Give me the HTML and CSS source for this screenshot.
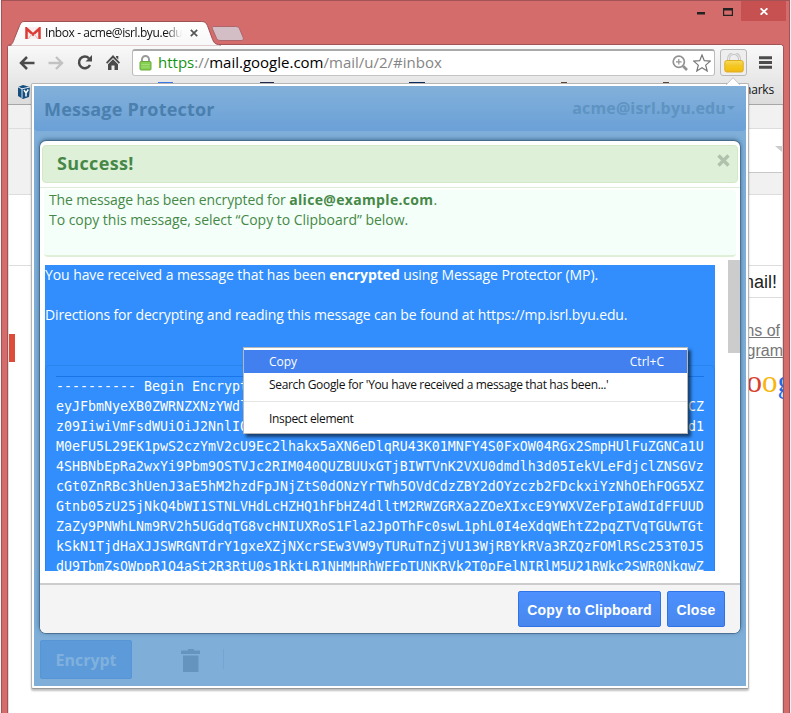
FILE: index.html
```html
<!DOCTYPE html>
<html lang="en">
<head>
<meta charset="utf-8">
<title>Message Protector</title>
<link rel="stylesheet" href="styles.css">
</head>
<body>
<div class="window">
  <header class="titlebar">
    <svg class="tab-shape" width="245" height="25" viewBox="0 0 245 25">
      <defs><linearGradient id="tabg" x1="0" y1="0" x2="0" y2="1"><stop offset="0" stop-color="#fff"/><stop offset="1" stop-color="#f7f7f7"/></linearGradient></defs>
      <path d="M0 25 C4 23 4 21 6 16 L10 6 C12 1 13 .5 16 .5 H191 C196 .5 197 1 199 6 L203 17 C205 22 206 23.500 211 23.500 V25 Z" fill="url(#tabg)" stroke="#9d5154"/>
      <path d="M3 25 H211 V24.500 H3Z" fill="#f7f7f7"/>
      <path d="M205 5.500 H225 C229 5.500 230 6 231 9 L234 16 C235 19 234 19.500 232 19.500 H212 C209 19.500 208 19 207 16 L203.500 8 C202.500 6 203 5.500 205 5.500 Z" fill="#d4bec6" stroke="#ae656c"/>
    </svg>
    <div class="tab">
      <svg width="16" height="12" viewBox="0 0 16 12"><path d="M1 0h14v12H1z" fill="#f8eeee"/><path d="M1.500 12V1.500L8 7.500l6.500-6V12" fill="none" stroke="#dc3b35" stroke-width="2.500"/><path d="M3 12l4-5M13 12L9 7" stroke="#e4b5b2" fill="none"/></svg>
      <span class="tab-title">Inbox - acme@isrl.byu.edu</span>
      <svg width="8" height="8" viewBox="0 0 8 8"><path d="M.8.8l6.400 6.400M7.200.8L.8 7.200" stroke="#555" stroke-width="1.700"/></svg>
    </div>
    <div class="controls">
      <svg width="8" height="3"><path d="M0 0h8v2.500H0z" fill="#222"/></svg>
      <svg width="10" height="8" viewBox="0 0 10 8"><path d="M0 0h10v8H0zM1.200 2.400v4.400h7.600V2.400z" fill="#222" fill-rule="evenodd"/></svg>
      <div class="close-win"><svg width="8" height="7" viewBox="0 0 8 7"><path d="M.6.300l6.800 6.400M7.400.300L.6 6.700" stroke="#fff" stroke-width="1.800"/></svg></div>
    </div>
  </header>
  <div class="client">
    <div class="toolbar">
      <div class="nav">
        <svg width="16" height="14" viewBox="0 0 16 14"><path d="M15.500 7H2.500M8 1L2 7l6 6" fill="none" stroke="#4b4b4b" stroke-width="2.500"/></svg>
        <svg width="16" height="14" viewBox="0 0 16 14"><path d="M.5 7h13M8 1l6 6-6 6" fill="none" stroke="#c2c2c2" stroke-width="2.400"/></svg>
        <svg width="16" height="15" viewBox="0 0 16 15"><path d="M12 3.300A5.800 5.800 0 1 0 13 10" fill="none" stroke="#4b4b4b" stroke-width="2.500"/><path d="M15 0v6.500H8.500z" fill="#4b4b4b"/></svg>
        <svg width="14" height="15" viewBox="0 0 14 15"><path d="M7 0l7 7.500-1.200 1.200L7 3 1.200 8.700 0 7.500zM10 1h2.300v3.500L10 2.300zM2 9.200L7 4.300l5 4.900V15H8.500v-4.500h-3V15H2z" fill="#4b4b4b"/></svg>
      </div>
      <div class="omnibox">
        <svg width="13" height="16" viewBox="0 0 13 16"><path d="M3 8V4.500a3.500 3.500 0 0 1 7 0V8" fill="none" stroke="#9a9a9a" stroke-width="2"/><rect x="1" y="6.500" width="11" height="8.500" rx="1" fill="#86cf50" stroke="#69a93c"/><path d="M2.500 9.500h8M2.500 12h8" stroke="#a5df79"/></svg>
        <span class="url"><span class="secure">https</span><span class="dim">://</span>mail.google.com<span class="dim">/mail/u/2/#inbox</span></span>
        <svg class="mag" width="16" height="16" viewBox="0 0 16 16"><circle cx="6.800" cy="6.800" r="5.600" fill="none" stroke="#929292" stroke-width="1.700"/><path d="M11 11l4 4" stroke="#929292" stroke-width="2.600"/><path d="M6.800 4v5.600M4 6.800h5.600" stroke="#929292" stroke-width="1.200"/></svg>
        <svg width="18" height="18" viewBox="0 0 18 18"><path d="M9 1l2.300 5.700 6 .4-4.600 4 1.500 5.900L9 13.800l-5.200 3.200 1.500-5.900-4.600-4 6-.4z" fill="none" stroke="#777" stroke-width="1.200"/></svg>
      </div>
      <div class="ext"><svg width="20" height="20" viewBox="0 0 20 20"><defs><linearGradient id="gold" x1="0" y1="0" x2="0" y2="1"><stop offset="0" stop-color="#f9dc55"/><stop offset=".5" stop-color="#f2c326"/><stop offset=".55" stop-color="#f5cb13"/><stop offset="1" stop-color="#f0b61c"/></linearGradient></defs><path d="M4.500 9V6a5 5 0 0 1 11 0V9" fill="none" stroke="#c4c4c4" stroke-width="3"/><path d="M4.500 9V6a5 5 0 0 1 11 0V9" fill="none" stroke="#eee"/><rect x=".8" y="7.500" width="18.400" height="11.500" rx="2" fill="url(#gold)" stroke="#dfad25"/></svg></div>
      <svg width="13" height="13" viewBox="0 0 13 13"><path d="M0 1.700h13M0 6.500h13M0 11.300h13" stroke="#4c4c4c" stroke-width="2.900"/></svg>
    </div>
    <div class="bookmarks">
      <svg width="12" height="16" viewBox="0 0 12 16"><path d="M0 3l5-2 7 2-1 10-6 2-5-3z" fill="#164e7e"/><path d="M4 4.500V14M0 3l4 1.800L12 3" stroke="#dfe8f1" fill="none"/><path d="M6 6l2 3 2.300-3.500M8 9v3.500" stroke="#fff" fill="none" stroke-width="1.500"/></svg>
      <div class="tips"><i class="t1"></i><i class="t2"></i><i class="t3"></i><i class="t4"></i><i class="t4 t5"></i></div>
      <span>Other bookmarks</span>
    </div>
    <main class="mail">
      <div class="band strip-a"></div>
      <div class="band strip-b"><i class="caret"></i></div>
      <div class="band strip-c"></div>
      <div class="band strip-d"></div>
      <div class="band strip-e">mail!</div>
      <div class="rest">
        <div class="selected"></div>
        <div class="side">
          <div class="links"><span>Terms of</span><span>Program</span></div>
          <div class="logo"><b class="g-red">o</b><b class="g-yel">o</b><b class="g-blu">g</b></div>
        </div>
      </div>
    </main>
  </div>
</div>

<div class="popup">
  <div class="app">
    <div class="app-head"><span class="brand">Message Protector</span><span class="account">acme@isrl.byu.edu<i></i></span></div>
    <div class="modal">
      <div class="modal-head">
        <div class="success"><span>Success!</span><svg width="13" height="13" viewBox="0 0 13 13"><path d="M1.500 1.500l10 10M11.500 1.500l-10 10" stroke="#b0c2ab" stroke-width="3.400"/></svg></div>
      </div>
      <div class="notice">
        <div class="l1">The message has been encrypted for <b>alice@example.com</b>.</div>
        <div class="l2">To copy this message, select “Copy to Clipboard” below.</div>
      </div>
      <div class="scroll">
        <div class="message">
          <p class="p1">You have received a message that has been <b>encrypted</b> using Message Protector (MP).</p>
          <p class="p2">Directions for decrypting and reading this message can be found at https://mp.isrl.byu.edu.</p>
          <div class="cipher">
            <div>---------- Begin Encrypt</div>
            <div><span>eyJFbmNyeXB0ZWRNZXNzYWdl</span><span>CZ</span></div>
            <div><span>z09IiwiVmFsdWUiOiJ2NnlIQ</span><span>d1</span></div>
            <div>M0eFU5L29EK1pwS2czYmV2cU9Ec2lhakx5aXN6eDlqRU43K01MNFY4S0FxOW04RGx2SmpHUlFuZGNCa1U</div>
            <div>4SHBNbEpRa2wxYi9Pbm9OSTVJc2RIM040QUZBUUxGTjBIWTVnK2VXU0dmdlh3d05IekVLeFdjclZNSGVz</div>
            <div>cGt0ZnRBc3hUenJ3aE5hM2hzdFpJNjZtS0dONzYrTWh5OVdCdzZBY2dOYzczb2FDckxiYzNhOEhFOG5XZ</div>
            <div>Gtnb05zU25jNkQ4bWI1STNLVHdLcHZHQ1hFbHZ4dlltM2RWZGRXa2ZOeXIxcE9YWXVZeFpIaWdIdFFUUD</div>
            <div>ZaZy9PNWhLNm9RV2h5UGdqTG8vcHNIUXRoS1Fla2JpOThFc0swL1phL0I4eXdqWEhtZ2pqZTVqTGUwTGt</div>
            <div>kSkN1TjdHaXJJSWRGNTdrY1gxeXZjNXcrSEw3VW9yTURuTnZjVU13WjRBYkRVa3RZQzFOMlRSc253T0J5</div>
            <div>dU9TbmZsQWppR1Q4aSt2R3RtU0s1RktLR1NHMHRhWFFpTUNKRVk2T0pFelNIRlM5U21RWkc2SWR0NkgwZ</div>
          </div>
        </div>
        <div class="thumb"></div>
      </div>
      <div class="modal-foot"><button class="copy">Copy to Clipboard</button><button>Close</button></div>
    </div>
    <div class="app-foot">
      <div class="encrypt"><span>Encrypt</span></div>
      <svg width="20" height="24" viewBox="0 0 20 24"><path d="M7 0h6v1.500h6V5H0V1.500h7zM2 6.500h15.500V23H2z" fill="#6594bf"/></svg>
      <i></i>
    </div>
  </div>
  <svg class="arrow" width="14" height="8" viewBox="0 0 14 8"><path d="M0 8L7 .7 14 8" fill="#fff" stroke="#bbb" stroke-width=".8"/></svg>
</div>

<div class="menu">
  <div class="item active"><span>Copy</span><span class="key">Ctrl+C</span></div>
  <div class="item search"><span>Search Google for 'You have received a message that has been...'</span></div>
  <hr>
  <div class="item inspect"><span>Inspect element</span></div>
</div>
</body>
</html>
```
FILE: styles.css
```css
* { box-sizing: border-box; }
body { margin: 0; width: 791px; height: 713px; overflow: hidden; position: relative; background: #f4f4f4; font-family: "Open Sans", sans-serif; }
svg { display: block; flex: none; }

/* Browser window */
.window { width: 789px; height: 714px; margin-left: 1px; padding: 0 5px; background: #d56c6c; border: 1px solid #a25355; border-bottom: 0; }
.titlebar { height: 43px; position: relative; display: flex; justify-content: space-between; }
.tab-shape { position: absolute; left: 2px; top: 20px; z-index: 1; }
.tab { position: relative; z-index: 2; width: 200px; margin: 21px 0 0 18px; height: 22px; display: flex; align-items: center; }
.tab-title { width: 137px; margin: 0 8px 0 4px; overflow: hidden; white-space: nowrap; font-size: 12px; line-height: 22px; letter-spacing: -.42px; color: #111; -webkit-mask-image: linear-gradient(90deg, #000 88%, transparent); mask-image: linear-gradient(90deg, #000 88%, transparent); }
.controls { display: flex; height: 20px; align-items: center; margin-right: -2px; }
.controls > svg:first-child { margin: 5px 18px 0 0; }
.controls > svg:nth-child(2) { margin: 1px 8px 0 0; }
.close-win { width: 45px; height: 20px; background: #c75050; display: flex; align-items: center; justify-content: center; }
.client { height: 669px; border: 1px solid #a25355; border-bottom: 0; border-radius: 4px 4px 0 0; background: #fff; overflow: hidden; display: flex; flex-direction: column; }
.toolbar { height: 34px; padding: 4px 11px 0 11px; display: flex; background: linear-gradient(#f9f9f9, #e8e8e8); }
.toolbar > svg { margin: 7px 0 0 12px; }
.nav { display: flex; align-items: center; gap: 13px; width: 113px; height: 27px; }
.omnibox { width: 583px; height: 27px; border: 1px solid #b0b0b0; border-width: 2px 1px 1px; border-color: #aaa #bbb #c4c4c4; border-radius: 3px; background: #fff; display: flex; align-items: center; padding: 0 3px 0 6px; }
.url { flex: 1; margin: -2px 0 0 6px; font-size: 15px; white-space: nowrap; color: #000; line-height: 22px; }
.secure { color: #149414; }
.dim { color: #858585; }
.mag { margin-right: 5px; }
.ext { width: 27px; height: 27px; margin-left: 5px; border: 1px solid #b8b8b8; border-radius: 3px; background: #eee; display: flex; align-items: center; justify-content: center; }
.bookmarks { height: 26px; border-bottom: 1px solid #a6a6a6; background: linear-gradient(#e8e8e8, #dcdcdc); display: flex; align-items: center; padding: 0 9px 0 10px; font-size: 12px; letter-spacing: -.2px; color: #111; }
.bookmarks > span { line-height: 20px; margin-top: -3px; white-space: nowrap; }
.tips { flex: 1; align-self: flex-start; margin-top: 3px; display: flex; }
.tips i { height: 2px; }
.t1 { width: 15px; margin-left: 128px; background: #3b78e7; }
.t2 { width: 14px; margin-left: 87px; background: #1d2c4e; }
.t3 { width: 16px; margin-left: 135px; background: #0c2a5c; }
.t4 { width: 6px; margin-left: 136px; background: #5b4534; }
.t5 { margin-left: 96px; }
.mail { flex: 1; font-family: "Liberation Sans", sans-serif; border: solid #ddd; border-width: 0 1px; }
.band { border-bottom: 1px solid #ddd; }
.strip-a { height: 24px; background: #f1f1f1; }
.strip-b { height: 44px; background: linear-gradient(90deg, #f1f1f1 50%, #fff 50%); border-image: linear-gradient(90deg, #f1f1f1 50%, #c8c8c8 50%) 1; display: flex; justify-content: flex-end; padding-top: 17px; overflow: hidden; }
.caret { width: 0; height: 0; border: 7px solid transparent; border-top: 6px solid #ccc; border-bottom: 0; margin-right: -7px; }
.strip-c { height: 22px; background: #f1f1f1; }
.strip-d { height: 71px; }
.strip-e { height: 32px; border-image: linear-gradient(90deg, #fff 50%, #ddd 50%) 1; text-align: right; padding-right: 5px; font-size: 18px; line-height: 32px; color: #222; }
.rest { display: flex; justify-content: space-between; }
.selected { width: 6px; height: 28px; margin-top: 36px; background: #dd4b39; }
.side { width: 72px; margin-top: 23px; display: flex; flex-direction: column; align-items: flex-end; }
.links { display: flex; flex-direction: column; align-items: flex-end; font-size: 16px; line-height: 20px; color: #777; text-decoration: underline; }
.links > span:first-child { margin-right: 2px; }
.links > span:nth-child(2) { margin-right: -1px; }
.logo { display: flex; font-family: "Liberation Serif", serif; font-size: 31px; line-height: 28px; margin: 7px -11px 0 0; }
.logo b { font-weight: 400; }
.g-red { color: #d8412f; }
.g-yel { color: #f8b50a; }
.g-blu { color: #1c6bea; }

/* Extension popup */
.popup { position: absolute; left: 31px; top: 83px; width: 718px; height: 606px; padding: 2px; background: #fff; border: 1px solid #b5b5b5; border-bottom-color: #999; border-radius: 2px; box-shadow: 0 2px 2px rgba(0,0,0,.25); }
.arrow { position: absolute; left: 694px; top: -7px; }
.app { height: 600px; background: #7fafd8; display: flex; flex-direction: column; }
.app-head { height: 45px; margin-bottom: 10px; padding: 0 11px 0 10px; display: flex; justify-content: space-between; align-items: center; background: linear-gradient(#82b0d9, #6ba1d8); border-radius: 0 0 4px 4px; }
.brand { margin-top: 2px; font-size: 18px; font-weight: 700; letter-spacing: .2px; color: #4a7fae; }
.account { display: flex; align-items: center; font-size: 16px; font-weight: 700; color: #5e93c2; letter-spacing: .14px; }
.account i { border: 4px solid transparent; border-top-color: #5e93c2; border-bottom: 0; margin-left: 1px; }
.modal { width: 700px; height: 493px; margin-left: 6px; background: #fff; border-radius: 6px; display: flex; flex-direction: column; overflow: hidden; box-shadow: 0 0 0 .7px #426685, 0 -1px 5px #315b80; }
.modal-head { height: 47px; padding: 4px 2px; border-bottom: 1px solid #ddeedb; }
.success { height: 38px; background: #dff0d8; border: 1px solid #d3e8c6; border-radius: 4px; padding: 0 7px 0 14px; display: flex; justify-content: space-between; color: #468847; font-size: 18px; font-weight: 700; letter-spacing: .35px; line-height: 35px; }
.success svg { margin-top: 8px; }
.notice { height: 67px; margin: 2px 4px 0; padding: 0 5px; background: #f5fffa; border-bottom: 2px solid #dff0d8; border-radius: 4px; color: #468847; font-size: 14px; line-height: 20px; white-space: nowrap; }
.l1 { letter-spacing: -.11px; }
.l1 b { letter-spacing: .33px; }
.l2 { letter-spacing: -.03px; }
.scroll { height: 312px; margin-top: 3px; padding: 5px 0 0 5px; display: flex; justify-content: space-between; }
.message { width: 670px; height: 306px; background: #318efc; color: #fff; font-size: 14px; line-height: 20px; white-space: nowrap; overflow: hidden; }
.message p { margin: 0 0 20px; }
.p1 { letter-spacing: -.08px; }
.message .p2 { margin-bottom: 40px; letter-spacing: -.125px; }
.cipher { height: 220px; border: 1px solid #2a84ee; border-radius: 4px; padding: 10px 10px; font-family: "DejaVu Sans Mono", monospace; font-size: 13.290px; }
.cipher > div { display: flex; justify-content: space-between; width: 648px; height: 20px; line-height: 21px; }
.cipher > div:first-child { border-top: 1px solid #1976e8; line-height: 19px; }
.thumb { width: 12px; height: 93px; margin-top: -5px; background: #ccc; }
.modal-foot { flex: 1; margin-top: 11px; border-top: 2px solid #ccc; background: #f4f4f4; display: flex; justify-content: flex-end; gap: 6px; padding: 6px 15px; }
button { height: 36px; width: 58px; padding: 0; border: 1px solid #2f73e6; border-radius: 2px; background: linear-gradient(#4d90fe, #4787ed); color: #fff; font: bold 14px "Liberation Sans", sans-serif; letter-spacing: .2px; line-height: 36px; }
.copy { width: 143px; }
.app-foot { flex: 1; padding: 7px 6px; display: flex; }
.encrypt { width: 92px; height: 39px; border: 1px solid #5695d6; border-radius: 2px; background: #5c9ad9; color: #80b1dd; font-size: 16px; font-weight: 700; line-height: 38px; text-align: center; }
.app-foot svg { margin: 9px 0 0 49px; }
.app-foot i { width: 1px; height: 20px; margin: 9px 0 0 22px; background: #75a6d1; }

/* Context menu */
.menu { position: absolute; left: 243px; top: 347px; width: 445px; height: 87px; padding-top: 2px; background: #fff; border: 1px solid #b8b8b8; box-shadow: 3px 3px 3px rgba(0,0,0,.55); font-size: 12px; color: #111; white-space: nowrap; }
.item { height: 23px; line-height: 24px; padding: 0 23px 0 25px; display: flex; justify-content: space-between; letter-spacing: -.34px; }
.active { background: #4280f0; color: #fff; letter-spacing: 0; }
.menu hr { margin: 5px 0; border: 0; border-top: 1px solid #e4e4e4; }
```
